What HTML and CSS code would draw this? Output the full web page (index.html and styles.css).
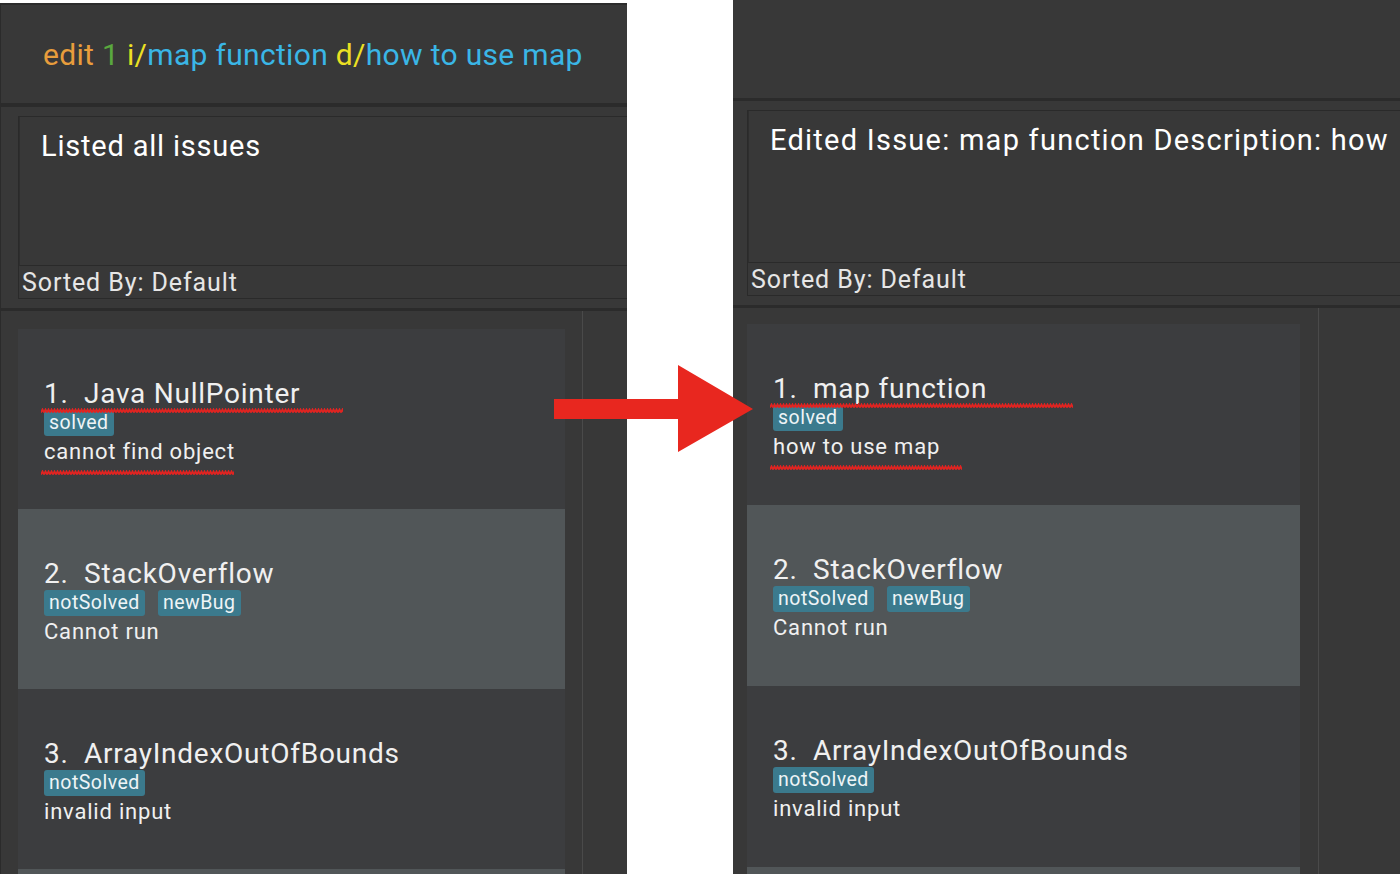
FILE: index.html
```html
<!DOCTYPE html>
<html lang="en">
<head>
<meta charset="utf-8">
<title>Issue tracker edit command</title>
<link rel="stylesheet" href="styles.css">
</head>
<body>
<div class="stage">
  <section class="shot shot-left">
    <div class="cmd"><span class="cmd-text"><span class="c-cmd">edit</span> <span class="c-idx">1</span> <span class="c-pre">i/</span><span class="c-arg">map function</span> <span class="c-pre">d/</span><span class="c-arg">how to use map</span></span></div>
    <div class="result-wrap">
      <div class="result">
        <div class="message">Listed all issues</div>
        <div class="sorted">Sorted By: Default</div>
      </div>
    </div>
    <div class="list-wrap">
      <div class="list">
        <div class="card card-a">
          <div class="title">1.&nbsp; Java NullPointer<svg class="squiggle sq-title" width="302" height="6" aria-hidden="true"><defs><pattern id="zz1" width="3" height="6" patternUnits="userSpaceOnUse"><path d="M0 4.6 L1.5 1.4 L3 4.6" stroke="#e32320" stroke-width="1.7" fill="none"/></pattern></defs><rect width="302" height="6" fill="url(#zz1)"/></svg></div>
          <div class="tags"><span class="tag">solved</span></div>
          <div class="desc">cannot find object<svg class="squiggle sq-desc" width="193" height="6" aria-hidden="true"><defs><pattern id="zz2" width="3" height="6" patternUnits="userSpaceOnUse"><path d="M0 4.6 L1.5 1.4 L3 4.6" stroke="#e32320" stroke-width="1.7" fill="none"/></pattern></defs><rect width="193" height="6" fill="url(#zz2)"/></svg></div>
        </div>
        <div class="card card-b">
          <div class="title">2.&nbsp; StackOverflow</div>
          <div class="tags"><span class="tag">notSolved</span><span class="tag">newBug</span></div>
          <div class="desc">Cannot run</div>
        </div>
        <div class="card card-a">
          <div class="title">3.&nbsp; ArrayIndexOutOfBounds</div>
          <div class="tags"><span class="tag">notSolved</span></div>
          <div class="desc">invalid input</div>
        </div>
        <div class="card card-b"></div>
      </div>
      <div class="scroll-line"></div>
    </div>
  </section>

  <section class="shot shot-right">
    <div class="cmd"></div>
    <div class="result-wrap">
      <div class="result">
        <div class="message">Edited Issue: map function Description: how</div>
        <div class="sorted">Sorted By: Default</div>
      </div>
    </div>
    <div class="list-wrap">
      <div class="list">
        <div class="card card-a">
          <div class="title">1.&nbsp; map function<svg class="squiggle sq-title" width="303" height="6" aria-hidden="true"><defs><pattern id="zz3" width="3" height="6" patternUnits="userSpaceOnUse"><path d="M0 4.6 L1.5 1.4 L3 4.6" stroke="#e32320" stroke-width="1.7" fill="none"/></pattern></defs><rect width="303" height="6" fill="url(#zz3)"/></svg></div>
          <div class="tags"><span class="tag">solved</span></div>
          <div class="desc">how to use map<svg class="squiggle sq-desc" width="192" height="6" aria-hidden="true"><defs><pattern id="zz4" width="3" height="6" patternUnits="userSpaceOnUse"><path d="M0 4.6 L1.5 1.4 L3 4.6" stroke="#e32320" stroke-width="1.7" fill="none"/></pattern></defs><rect width="192" height="6" fill="url(#zz4)"/></svg></div>
        </div>
        <div class="card card-b">
          <div class="title">2.&nbsp; StackOverflow</div>
          <div class="tags"><span class="tag">notSolved</span><span class="tag">newBug</span></div>
          <div class="desc">Cannot run</div>
        </div>
        <div class="card card-a">
          <div class="title">3.&nbsp; ArrayIndexOutOfBounds</div>
          <div class="tags"><span class="tag">notSolved</span></div>
          <div class="desc">invalid input</div>
        </div>
        <div class="card card-b"></div>
      </div>
      <div class="scroll-line"></div>
    </div>
  </section>

  <svg class="arrow" width="200" height="88" viewBox="0 0 200 88" aria-hidden="true">
    <polygon points="0,34 124,34 124,0 199,44 124,87 124,54 0,54" fill="#e8271f"/>
  </svg>
</div>
</body>
</html>
```

FILE: styles.css
```css
html, body {
  margin: 0;
  padding: 0;
  background: #ffffff;
  height: 874px;
  overflow: hidden;
}

.stage {
  position: relative;
  display: flex;
  align-items: flex-start;
  height: 874px;
  font-family: Roboto, "Liberation Sans", Arial, sans-serif;
}

.shot {
  display: flex;
  flex-direction: column;
  background: #383838;
  overflow: hidden;
  box-sizing: border-box;
  flex: none;
}

.shot-left {
  width: 627px;
  height: 871px;
  margin-top: 3px;
  border-top: 2px solid #2c2c2c;
  border-left: 1px solid #2b2b2b;
}

.shot-right {
  width: 667px;
  height: 874px;
  margin-left: 106px;
}

/* command box */
.cmd {
  flex: none;
  height: 98px;
  display: flex;
  align-items: center;
  padding-left: 42px;
  border-bottom: 4px solid #2b2b2b;
}

.cmd-text {
  font-size: 30px;
  letter-spacing: 0.32px;
  white-space: pre;
}

.shot-right .cmd {
  border-bottom-width: 3px;
}

.c-cmd { color: #e89d3c; }
.c-idx { color: #5aa83e; }
.c-pre { color: #ece023; }
.c-arg { color: #3ab6e6; }

/* result display */
.result-wrap {
  flex: none;
  padding: 9px 0 9px 17px;
  border-bottom: 3px solid #2b2b2b;
}

.shot-right .result-wrap {
  padding-left: 14px;
}

.result {
  width: 1100px;
  border: 1px solid #2a2a2a;
}

.message {
  height: 149px;
  box-sizing: border-box;
  padding: 14px 0 0 21px;
  font-size: 29px;
  line-height: 30px;
  letter-spacing: 0.8px;
  color: #ffffff;
  white-space: nowrap;
  border-bottom: 1px solid #2a2a2a;
  border-left: 1px solid #2e2e2e;
}

.shot-right .message {
  height: 152px;
  letter-spacing: 1.25px;
}

.sorted {
  height: 32px;
  padding-left: 3px;
  font-size: 25px;
  line-height: 34px;
  letter-spacing: 0.9px;
  color: #e6e6e6;
  overflow: hidden;
}

/* list */
.list-wrap {
  flex: 1;
  display: flex;
  min-height: 0;
}

.list {
  flex: none;
  display: flex;
  flex-direction: column;
  padding: 18px 17px 0 17px;
}

.shot-right .list {
  padding: 16px 18px 0 14px;
}

.scroll-line {
  flex: none;
  width: 1px;
  background: #4a4a4a;
}

.card {
  position: relative;
  flex: none;
  width: 547px;
  height: 180px;
  box-sizing: border-box;
  display: flex;
  flex-direction: column;
  justify-content: center;
  padding-left: 26px;
  padding-top: 5px;
  color: #f0f0f0;
}

.shot-right .card {
  width: 553px;
  height: 181px;
}

.card-a { background: #3c3d3f; }
.card-b { background: #515658; }

.title {
  position: relative;
  font-size: 28px;
  line-height: 30px;
  letter-spacing: 0.75px;
  white-space: nowrap;
}

.tags {
  display: flex;
  gap: 13px;
  margin-top: 1px;
}

.tag {
  display: inline-block;
  height: 26px;
  padding: 0 5px;
  border-radius: 3px;
  background: #3b7a8d;
  color: #eef4f6;
  font-size: 19.5px;
  line-height: 26px;
  letter-spacing: 0.5px;
}

.desc {
  position: relative;
  margin-top: 3px;
  font-size: 22px;
  line-height: 26px;
  letter-spacing: 0.8px;
  white-space: nowrap;
}

/* red spell-check annotations */
.squiggle {
  position: absolute;
  left: -3px;
  display: block;
}

.sq-title {
  top: 29px;
}

.sq-desc {
  top: 31px;
}

.arrow {
  position: absolute;
  left: 554px;
  top: 365px;
}
```
